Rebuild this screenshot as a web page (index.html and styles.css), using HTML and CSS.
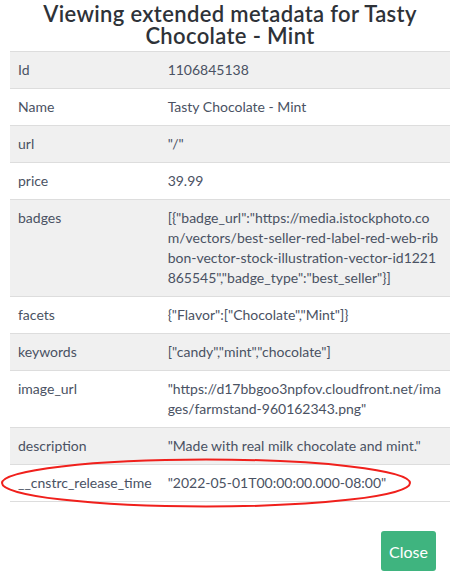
FILE: index.html
```html
<!DOCTYPE html>
<html>
<head>
<meta charset="utf-8">
<link rel="stylesheet" href="styles.css">
</head>
<body>
<div class="modal">
  <h3 class="title">Viewing extended metadata for Tasty Chocolate - Mint</h3>
  <div class="table-wrap">
    <table class="meta">
      <tbody>
        <tr><td class="k">Id</td><td class="v">1106845138</td></tr>
        <tr><td class="k">Name</td><td class="v">Tasty Chocolate - Mint</td></tr>
        <tr><td class="k">url</td><td class="v">"/"</td></tr>
        <tr><td class="k">price</td><td class="v">39.99</td></tr>
        <tr><td class="k">badges</td><td class="v">[{"badge_url":"https://media.istockphoto.com/vectors/best-seller-red-label-red-web-ribbon-vector-stock-illustration-vector-id1221865545","badge_type":"best_seller"}]</td></tr>
        <tr><td class="k">facets</td><td class="v">{"Flavor":["Chocolate","Mint"]}</td></tr>
        <tr><td class="k">keywords</td><td class="v">["candy","mint","chocolate"]</td></tr>
        <tr><td class="k">image_url</td><td class="v">"https://d17bbgoo3npfov.cloudfront.net/images/farmstand-960162343.png"</td></tr>
        <tr><td class="k">description</td><td class="v">"Made with real milk chocolate and mint."</td></tr>
        <tr><td class="k">__cnstrc_release_time</td><td class="v">"2022-05-01T00:00:00.000-08:00"</td></tr>
      </tbody>
    </table>
    <svg class="ring" width="420" height="56" viewBox="0 0 420 56">
      <ellipse cx="208" cy="28" rx="204" ry="23.5" fill="none" stroke="#f0201c" stroke-width="2"/>
    </svg>
  </div>
  <div class="footer">
    <button class="close">Close</button>
  </div>
</div>
</body>
</html>
```

FILE: styles.css
```css
html, body {
  margin: 0;
  padding: 0;
  background: #fff;
}
body {
  font-family: Lato, "Open Sans", sans-serif;
  color: #4a5263;
  font-size: 14px;
  line-height: 20px;
}
.modal {
  padding: 0 4px 0 10px;
}
.title {
  margin: 0;
  padding: 3px 0 4px 0;
  text-align: center;
  font-size: 22px;
  line-height: 22px;
  font-weight: 600;
  color: #2e3238;
  letter-spacing: 0.35px;
}
.table-wrap {
  position: relative;
}
.meta {
  width: 100%;
  border-collapse: collapse;
  border-top: 1px solid #dddddd;
}
.meta td {
  padding: 8px;
  vertical-align: top;
  border-bottom: 1px solid #dddddd;
}
.meta tr:nth-child(odd) td {
  background: #f0f0f0;
}
.meta td.k {
  width: 130px;
  white-space: nowrap;
}
.meta td.v {
  word-break: break-all;
}
.ring {
  position: absolute;
  left: -12px;
  bottom: -9px;
  overflow: visible;
}
.footer {
  display: flex;
  justify-content: flex-end;
  padding: 29px 14px 0 0;
}
.close {
  background: #3fb47f;
  color: #fff;
  border: none;
  border-radius: 3px;
  font-family: Lato, sans-serif;
  font-size: 16px;
  padding: 0 8px;
  height: 40px;
}
```
